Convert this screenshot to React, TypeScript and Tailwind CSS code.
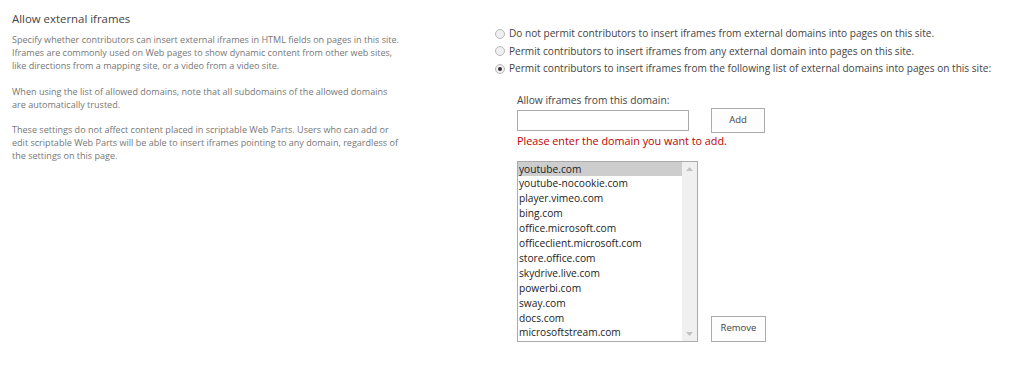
import React from "react";

const domains = [
  "youtube.com",
  "youtube-nocookie.com",
  "player.vimeo.com",
  "bing.com",
  "office.microsoft.com",
  "officeclient.microsoft.com",
  "store.office.com",
  "skydrive.live.com",
  "powerbi.com",
  "sway.com",
  "docs.com",
  "microsoftstream.com",
];

function Radio({ checked, label }: { checked?: boolean; label: string }) {
  return (
    <label className="flex items-center h-[17.5px] whitespace-nowrap">
      <span className="w-[10px] h-[10px] ml-[2px] mr-[4px] rounded-full border border-[#b8b8b8] bg-[#f0f0f0] flex items-center justify-center">
        {checked && <span className="w-[4px] h-[4px] rounded-full bg-[#333]" />}
      </span>
      <span>{label}</span>
    </label>
  );
}

export default function App() {
  return (
    <div
      className="w-[1024px] h-[372px] bg-white flex text-[#444]"
      style={{ fontFamily: '"Open Sans", "Noto Sans", sans-serif' }}
    >
      <div className="w-[493px] pl-[12px] pt-[10px]">
        <div className="text-[11.4px] leading-[18px] text-[#444]">Allow external iframes</div>
        <div className="text-[9.05px] leading-[12.9px] text-[#777] mt-[6px] whitespace-nowrap">
          <p>
            Specify whether contributors can insert external iframes in HTML fields on pages in this site.
            <br />
            Iframes are commonly used on Web pages to show dynamic content from other web sites,
            <br />
            like directions from a mapping site, or a video from a video site.
          </p>
          <p className="mt-[12.9px]">
            When using the list of allowed domains, note that all subdomains of the allowed domains
            <br />
            are automatically trusted.
          </p>
          <p className="mt-[12.9px]">
            These settings do not affect content placed in scriptable Web Parts. Users who can add or
            <br />
            edit scriptable Web Parts will be able to insert iframes pointing to any domain, regardless of
            <br />
            the settings on this page.
          </p>
        </div>
      </div>
      <div className="pt-[25px] text-[10.1px] text-[#444]">
        <Radio label="Do not permit contributors to insert iframes from external domains into pages on this site." />
        <Radio label="Permit contributors to insert iframes from any external domain into pages on this site." />
        <Radio checked label="Permit contributors to insert iframes from the following list of external domains into pages on this site:" />
        <div className="pl-[24px] mt-[14px]">
          <div className="leading-[16px] text-[10.25px]">Allow iframes from this domain:</div>
          <div className="flex items-start">
            <div className="w-[172px] h-[21px] border border-[#ababab] bg-white mt-[2px]" />
            <button className="ml-[22px] w-[54px] h-[25px] border border-[#ababab] bg-[#fdfdfd] text-[9.5px] text-[#444]">
              Add
            </button>
          </div>
          <div className="text-[#c00000] leading-[16px] text-[10.8px]">Please enter the domain you want to add.</div>
          <div className="flex items-end mt-[12px]">
            <div className="w-[181px] h-[181px] border border-[#ababab] flex bg-white">
              <div className="flex-1 text-[10.2px] leading-[14.9px] text-[#222]">
                {domains.map((d, i) => (
                  <div key={d} className={"pl-[1px] " + (i === 0 ? "bg-[#cdcdcd]" : "")}>
                    {d}
                  </div>
                ))}
              </div>
              <div className="w-[15px] bg-[#f0f0f0] flex flex-col justify-between items-center py-[5px]">
                <svg width="7" height="4" viewBox="0 0 7 4"><path d="M0 4 L3.5 0 L7 4 Z" fill="#c2c2c2" /></svg>
                <svg width="7" height="4" viewBox="0 0 7 4"><path d="M0 0 L3.5 4 L7 0 Z" fill="#c2c2c2" /></svg>
              </div>
            </div>
            <button className="ml-[13px] w-[55px] h-[26px] border border-[#ababab] bg-[#fdfdfd] text-[9.5px] text-[#444]">
              Remove
            </button>
          </div>
        </div>
      </div>
    </div>
  );
}
